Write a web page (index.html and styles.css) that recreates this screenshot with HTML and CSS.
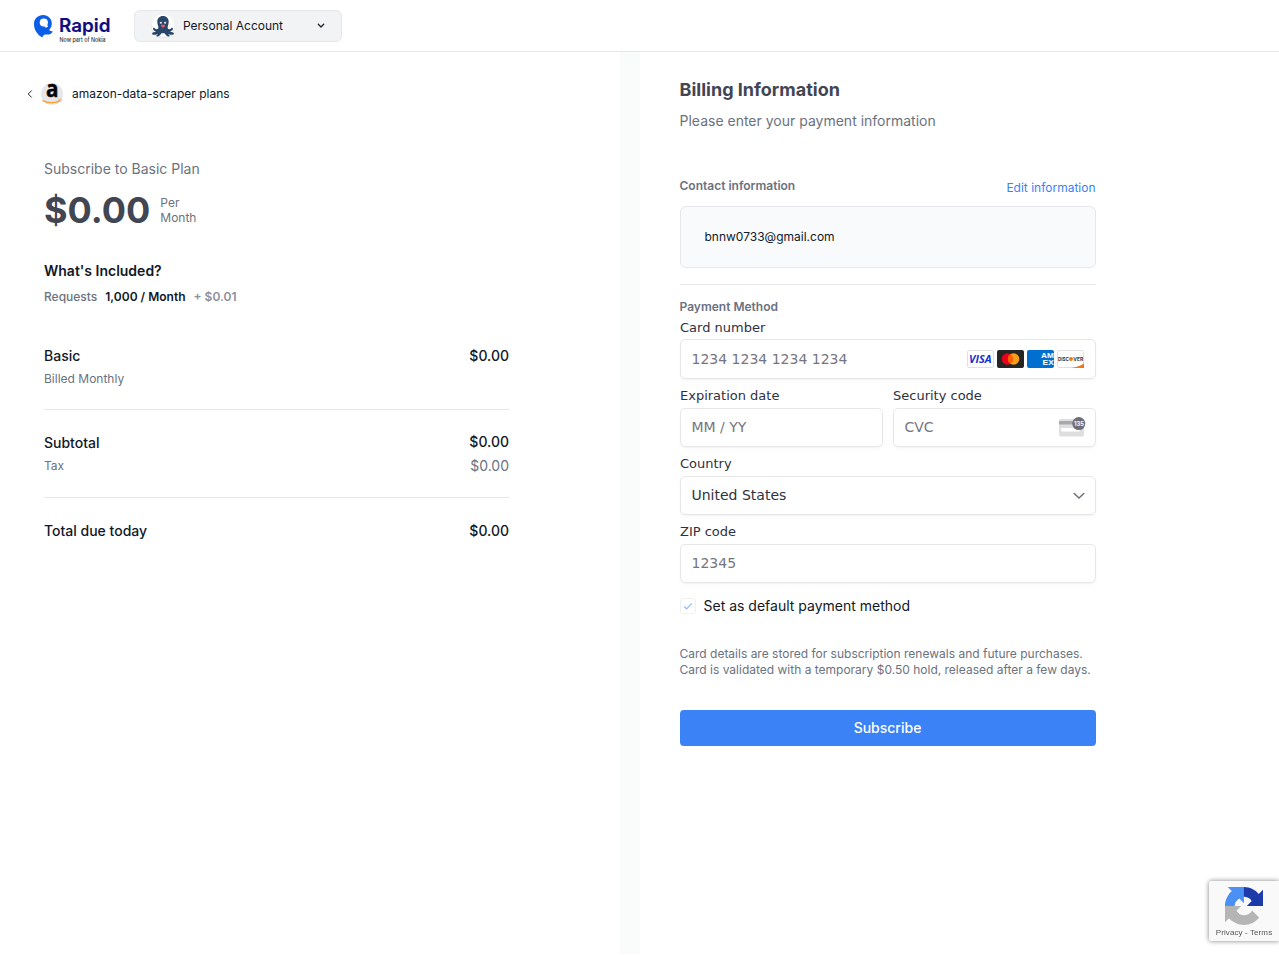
FILE: index.html
```html
<!DOCTYPE html>
<html lang="en">
<head>
<meta charset="utf-8">
<title>Rapid - Billing Information</title>
<link rel="stylesheet" href="styles.css">
</head>
<body>
<header class="topbar">
  <svg class="logo" width="82" height="34" viewBox="0 0 82 34" role="img" aria-label="Rapid, now part of Nokia">
    <path fill="#0b5fe6" d="M10.300 5C15 5 18.800 8.600 18.800 13.400c0 2.500-.9 4.700-2.600 6.300.8 1.100 1.900 1.700 3.800 1.700-1.400 2.200-3.700 3.400-6.600 3.200-1.400-.1-3.200.3-3.900 2.600-1.900-.7-3.500-1.700-4.800-3.500C2.400 21.500 1 18 1 14 1 8.600 5 5 10.300 5z"/>
    <circle cx="10.800" cy="12.500" r="4.100" fill="#fff"/>
    <path fill="#fff" d="m10 14 3.600-.6 1.500 3.400-2.600 1z"/>
    <text class="logo-name" x="26" y="21.500" textLength="51.500" lengthAdjust="spacingAndGlyphs">Rapid</text>
    <text class="logo-sub" x="26.500" y="32.200" textLength="46" lengthAdjust="spacingAndGlyphs">Now part of Nokia</text>
  </svg>
  <button class="account">
    <svg class="avatar" width="26" height="26" viewBox="0 0 26 26">
      <circle cx="13" cy="13.500" r="11.700" fill="#e4e7eb"/>
      <circle cx="13" cy="12.700" r="11.200" fill="#fff"/>
      <path fill="#294769" d="M13 3c-3.600 0-5.700 2.500-5.700 5.800 0 3 1.400 4.600 1 6.300-.4 1.500-2.700 1.600-3.500.1-.6-.9-2.200-.2-1.700 1.100.6 1.400 1.600 1.900 2.700 2-.6.800-1.600 1-2.900 1.100-1.100.2-1 2.100.3 2.300 2.200.2 3.500-.1 4.700-.9-.1.600-.5.900-1.100 1.200-.8.700-.2 1.800.9 1.500 1.800-.4 2.900-1.700 3.700-3.200h3.200c.8 1.500 1.900 2.800 3.700 3.200 1.100.3 1.700-.8.900-1.500-.6-.3-1-.6-1.100-1.200 1.200.8 2.500 1.100 4.700.9 1.300-.2 1.400-2.100.3-2.300-1.300-.1-2.300-.3-2.900-1.100 1.100-.1 2.100-.6 2.700-2 .5-1.300-1.100-2-1.700-1.100-.8 1.500-3.100 1.400-3.500-.1-.4-1.700 1-3.300 1-6.300C18.700 5.500 16.600 3 13 3z"/>
      <circle cx="10.900" cy="9.800" r="1.150" fill="#fff"/><circle cx="15.100" cy="9.800" r="1.150" fill="#fff"/>
      <circle cx="11" cy="10" r=".5" fill="#14263c"/><circle cx="15" cy="10" r=".5" fill="#14263c"/>
      <path fill="#f05268" d="M11 11.800h4c0 1.600-.7 2.800-2 2.800s-2-1.200-2-2.800z"/>
    </svg>
    <span class="account-name">Personal Account</span>
    <svg width="8" height="6" viewBox="0 0 8 6" fill="none" stroke="#1f2937" stroke-width="1.400" stroke-linecap="round" stroke-linejoin="round"><path d="M1.300 1.300 4 4l2.700-2.700"/></svg>
  </button>
</header>

<main class="columns">
  <section class="summary">
    <a class="back">
      <svg width="6" height="8" viewBox="0 0 6 8" fill="none" stroke="#1f2937"><path d="M4.700.5 1.200 4l3.500 3.500"/></svg>
      <svg class="api-icon" width="22" height="22" viewBox="0 0 22 22">
        <circle cx="11" cy="11" r="11" fill="#e6e7e9"/>
        <text class="api-letter" x="5" y="13.800" textLength="12.500" lengthAdjust="spacingAndGlyphs">a</text>
        <path d="M1.500 17.400c5.500 3.300 12.800 3.200 17.700.1" fill="none" stroke="#fba43a" stroke-width="1.500"/>
        <path d="M17.400 16.300c1.500-.3 2.900-.2 3 .2.200.7-.4 1.900-1.300 2.700" fill="none" stroke="#fba43a" stroke-width=".9"/>
      </svg>
      <span class="back-label">amazon-data-scraper plans</span>
    </a>
    <div class="order">
      <p class="plan">Subscribe to Basic Plan</p>
      <div class="price"><strong class="amount">$0.00</strong><span class="period">Per<br>Month</span></div>
      <h2 class="included">What's Included?</h2>
      <p class="quota"><span>Requests</span><b class="quota-value">1,000 / Month</b><span class="overage">+ $0.01</span></p>
      <div class="line line-basic"><span>Basic</span><span>$0.00</span></div>
      <div class="subline"><span>Billed Monthly</span></div>
      <hr class="rule rule-order">
      <div class="line line-subtotal"><span class="subtotal-label">Subtotal</span><span>$0.00</span></div>
      <div class="subline"><span>Tax</span><span class="tax">$0.00</span></div>
      <hr class="rule rule-tax">
      <div class="line line-total"><span>Total due today</span><span>$0.00</span></div>
    </div>
  </section>

  <section class="billing">
    <div class="billing-inner">
      <h1 class="title">Billing Information</h1>
      <p class="intro">Please enter your payment information</p>
      <div class="contact-head"><h3 class="section-name">Contact information</h3><a class="edit">Edit information</a></div>
      <div class="contact-box">bnnw0733@gmail.com</div>
      <hr class="rule rule-contact">
      <h3 class="section-name">Payment Method</h3>
      <div class="card-form">
        <div class="field">
          <span class="label label-card">Card number</span>
          <div class="input input-card">
            <span>1234 1234 1234 1234</span>
            <span class="brands">
              <svg width="27" height="18" viewBox="0 0 27 18"><rect x=".5" y=".5" width="26" height="17" rx="1.500" fill="#fff" stroke="#dfe1e4"/><text class="visa" x="2" y="13" textLength="22.500" lengthAdjust="spacingAndGlyphs">VISA</text></svg>
              <svg width="27" height="18" viewBox="0 0 27 18"><rect width="27" height="18" rx="2" fill="#252525"/><circle cx="10.400" cy="9" r="5.700" fill="#eb001b"/><circle cx="16.600" cy="9" r="5.700" fill="#f79e1b"/><path fill="#ff5f00" d="M13.500 4.200a5.700 5.700 0 0 1 0 9.600 5.700 5.700 0 0 1 0-9.600z"/></svg>
              <svg width="27" height="18" viewBox="0 0 27 18"><rect width="27" height="18" rx="2" fill="#016fd0"/><text class="amex" x="14" y="8.200" textLength="12.800" lengthAdjust="spacingAndGlyphs">AM</text><text class="amex" x="15.500" y="15.200" textLength="11.300" lengthAdjust="spacingAndGlyphs">EX</text></svg>
              <svg width="27" height="18" viewBox="0 0 27 18"><rect x=".5" y=".5" width="26" height="17" rx="1.500" fill="#fff" stroke="#dfe1e4"/><path fill="#f27712" d="M27 13.500V18H14.500c5-.7 9.300-2.300 12.500-4.500z"/><text class="discover" x="1" y="10.800" textLength="11" lengthAdjust="spacingAndGlyphs">DISC</text><circle cx="14" cy="8.900" r="2" fill="#f27712"/><text class="discover" x="16.200" y="10.800" textLength="10" lengthAdjust="spacingAndGlyphs">VER</text></svg>
            </span>
          </div>
        </div>
        <div class="pair">
          <div class="field"><span class="label">Expiration date</span><div class="input">MM / YY</div></div>
          <div class="field"><span class="label">Security code</span>
            <div class="input input-cvc"><span>CVC</span>
              <svg width="27" height="20" viewBox="0 0 27 20"><rect x="0" y="2" width="25" height="17.500" rx="2" fill="#dedee0"/><rect y="4" width="25" height="3.500" fill="#a9a9ad"/><rect x="2" y="11" width="19" height="3.500" rx="1" fill="#fff"/><circle cx="19.800" cy="6.600" r="6.500" fill="#6d6e78"/><text class="cvc-digits" x="15" y="9" textLength="10" lengthAdjust="spacingAndGlyphs">135</text></svg>
            </div>
          </div>
        </div>
        <div class="field"><span class="label">Country</span>
          <div class="input input-select"><span>United States</span>
            <svg class="caret" width="12" height="8" viewBox="0 0 12 8" fill="none" stroke="#6d6e78" stroke-width="1.500" stroke-linecap="round"><path d="M1.200 1.500 6 6l4.800-4.500"/></svg>
          </div>
        </div>
        <div class="field"><span class="label">ZIP code</span><div class="input">12345</div></div>
      </div>
      <div class="default">
        <svg class="check" width="16" height="16" viewBox="0 0 16 16" fill="none"><rect x=".5" y=".5" width="15" height="15" rx="2.500" stroke="#eff0f3"/><path d="m4.100 8.500 2.500 2.300 5.200-5.400" stroke="#93bbfd" stroke-width="1.200"/></svg>
        <span>Set as default payment method</span>
      </div>
      <p class="note">Card details are stored for subscription renewals and future purchases.<br>Card is validated with a temporary $0.50 hold, released after a few days.</p>
      <button class="subscribe">Subscribe</button>
    </div>
  </section>
</main>

<aside class="recaptcha">
  <svg width="38" height="38" viewBox="0 0 64 64">
    <path fill="#1c3aa9" d="M64 31.955l-.033-1.370V4.687l-7.160 7.160C50.948 4.674 42.033.093 32.050.093c-10.400 0-19.622 4.960-25.458 12.640l11.736 11.860a15.550 15.550 0 0 1 4.754-5.334c2.050-1.600 4.952-2.906 8.968-2.906.485 0 .860.057 1.135.163 4.976.393 9.288 3.140 11.828 7.124l-8.307 8.307L64 31.953"/>
    <path fill="#4a90f5" d="M31.862.094l-1.370.033H4.594l7.160 7.160C4.580 13.147 0 22.060 0 32.046c0 10.400 4.960 19.622 12.640 25.458L24.500 45.768a15.550 15.550 0 0 1-5.334-4.754c-1.600-2.050-2.906-4.952-2.906-8.968 0-.485.057-.860.163-1.135.393-4.976 3.140-9.288 7.124-11.828l8.307 8.307L31.860.095"/>
    <path fill="#b5b5b5" d="M.001 32.045l.033 1.370v25.898l7.160-7.160c5.860 7.173 14.774 11.754 24.760 11.754 10.400 0 19.622-4.960 25.458-12.640l-11.736-11.860a15.550 15.550 0 0 1-4.754 5.334c-2.050 1.600-4.952 2.906-8.968 2.906-.485 0-.860-.057-1.135-.163-4.976-.393-9.288-3.140-11.828-7.124l8.307-8.307c-10.522.040-22.400.066-27.295-.005"/>
  </svg>
  <span class="recaptcha-links">Privacy - Terms</span>
</aside>
</body>
</html>
```
FILE: styles.css
```css
* { box-sizing: border-box; }
body { margin: 0; height: 955px; overflow: hidden; display: flex; flex-direction: column; background: #fff; color: #111827; font: 14px/20px Inter, sans-serif; }
h1, h2, h3, p, hr { margin: 0; }
svg { display: block; flex: none; }
button { font: inherit; border: 0; margin: 0; }

.topbar { height: 52px; flex: none; display: flex; align-items: flex-start; padding: 10px 0 0 33px; border-bottom: 1px solid #e5e7eb; }
.logo { margin-right: 19px; overflow: visible; }
.logo-name { font: 600 18px Inter, sans-serif; fill: #100c80; stroke: #100c80; stroke-width: .2px; }
.logo-sub { font: 500 5.500px Inter, sans-serif; fill: #333; }
.account { width: 208px; height: 32px; display: flex; align-items: center; padding: 0 16px 0 15px; border: 1px solid #e5e7eb; border-radius: 6px; background: #f2f3f5; color: #111827; font-size: 12px; }
.account-name { margin: 0 auto 0 7px; }

.columns { height: 902px; display: grid; grid-template-columns: 620px 1fr; column-gap: 20px; background: #fafcfb; }
.summary { padding-top: 30px; background: #fff; }
.back { height: 24px; display: flex; align-items: center; padding-left: 27px; font-size: 12px; }
.api-icon { margin: 0 9px 0 8px; overflow: visible; }
.api-letter { font: 700 23px "Open Sans", sans-serif; fill: #050505; stroke: #050505; stroke-width: .5px; }
.order { width: 465px; margin: 53px 0 0 44px; }
.plan { color: #6b7280; }
.price { display: flex; align-items: center; gap: 10px; height: 40px; margin-top: 11px; }
.amount { font-size: 36px; line-height: 40px; font-weight: 700; color: #424653; }
.period { color: #6b7280; font-size: 12px; line-height: 15px; }
.included { margin-top: 31px; font-size: 14px; font-weight: 600; }
.quota { display: flex; gap: 8px; margin-top: 8px; color: #6b7280; font-size: 12px; line-height: 16px; font-weight: 500; }
.quota-value { color: #111827; font-weight: 600; }
.overage { color: #8b909b; font-weight: 600; }
.line { display: flex; justify-content: space-between; font-weight: 500; }
.line-basic { margin-top: 41px; }
.subline { display: flex; justify-content: space-between; align-items: center; height: 16px; margin-top: 5px; color: #6b7280; font-size: 12px; }
.tax { font-size: 14px; }
.rule { border: 0; height: 1px; background: #e5e7eb; }
.rule-order { margin-top: 22px; }
.line-subtotal { margin-top: 22px; padding-bottom: 1px; }
.subtotal-label { padding-top: 1px; margin-bottom: -1px; }
.rule-tax { margin-top: 23px; }
.line-total { margin-top: 23px; }

.billing { background: #fff; padding: 24px 0 0 39.500px; }
.billing-inner { width: 416px; }
.title { font-size: 18px; line-height: 28px; font-weight: 700; color: #424653; }
.intro { margin-top: 7px; color: #6b7280; }
.contact-head { display: flex; justify-content: space-between; height: 28px; margin-top: 47px; }
.section-name { color: #6b7280; font-size: 12px; line-height: 16px; font-weight: 600; }
.edit { padding-top: 2px; color: #3b82f6; font-size: 12px; line-height: 16px; }
.contact-box { height: 62px; padding: 0 24px; border: 1px solid #e5e7eb; border-radius: 6px; background: #f9fafb; font-size: 12px; line-height: 60px; }
.rule-contact { margin: 16px 0 14px; }
.card-form { display: grid; gap: 9px; margin: 5px -.500px 0 .500px; font-family: "DejaVu Sans", sans-serif; color: #30313d; }
.field { display: flex; flex-direction: column; }
.label { height: 20px; font-size: 13px; line-height: 15px; }
.label-card { height: 19px; }
.pair { display: grid; grid-template-columns: 1fr 1fr; gap: 10px; }
.input { height: 39px; display: flex; align-items: center; justify-content: space-between; padding: 0 11px 2px 10.500px; border: 1px solid #e6e6e6; border-radius: 5px; box-shadow: 0 1px 1px rgba(0,0,0,.03), 0 3px 6px rgba(0,0,0,.02); color: #757680; font-size: 14px; }
.input-card { height: 40px; padding-bottom: 0; }
.brands { display: flex; gap: 3px; }
.visa { font: italic 700 11px "Open Sans", sans-serif; fill: #1630cf; }
.amex { font: 700 6.500px/1 "Liberation Sans", sans-serif; fill: #fff; }
.discover { font: 700 5px Inter, sans-serif; fill: #333; }
.input-cvc { padding-right: 9px; }
.cvc-digits { font: 700 6.500px Inter, sans-serif; fill: #fff; }
.input-select { color: #30313d; padding-right: 10px; }
.caret { margin-top: 2px; }
.default { height: 16px; display: flex; align-items: center; gap: 8px; margin-top: 15px; }
.note { margin-top: 32px; color: #6b7280; font-size: 12px; line-height: 16px; white-space: nowrap; }
.subscribe { width: 100%; height: 36px; margin-top: 32px; border-radius: 4px; background: #3b82f6; color: #fff; font-weight: 500; }

.recaptcha { position: fixed; right: 0; bottom: 14px; width: 70px; height: 60px; display: flex; flex-direction: column; align-items: center; padding-top: 6px; border-radius: 2px 0 0 2px; background: #f9f9f9; box-shadow: 0 0 5px #808080; }
.recaptcha-links { margin-top: 2px; color: #555; font: 8px/11px "Liberation Sans", sans-serif; white-space: nowrap; letter-spacing: .1px; }
```
